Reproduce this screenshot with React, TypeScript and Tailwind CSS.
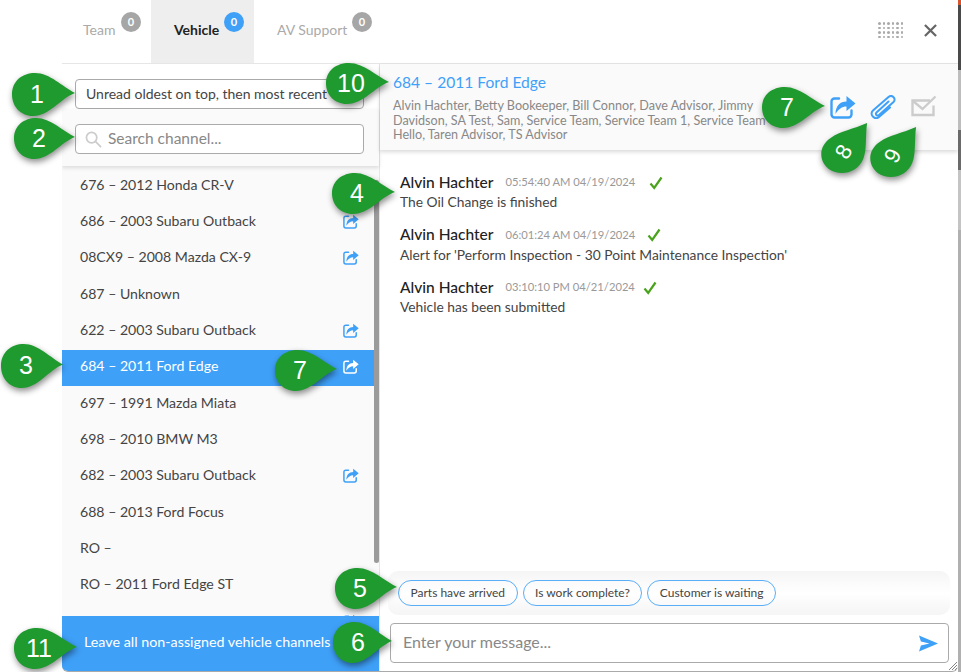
import React from "react";

function ShareIcon({ className }: { className?: string }) {
  return (
    <svg viewBox="0 0 26 24" className={className} fill="none">
      <path d="M9 3.500H4.500A3 3 0 0 0 1.500 6.500v13a3 3 0 0 0 3 3h14a3 3 0 0 0 3-3v-4" stroke="currentColor" strokeWidth="2.400" strokeLinecap="round" />
      <path d="M5.500 19c0-8 4.500-12.500 11-12.500V1L25.500 8.500 16.500 16V11.500C12 11.500 8.500 14 5.500 19z" fill="currentColor" />
    </svg>
  );
}

function Clip({ className }: { className?: string }) {
  return (
    <svg viewBox="0 0 26 24" className={className} fill="none" stroke="currentColor" strokeWidth="2" strokeLinecap="round">
      <path d="M18.500 6.500 6.500 17.500c-1.800 1.800.6 4 2.500 2.500L23.500 7c3.300-3.200-1.500-8-5-5L3 15.500c-4.200 4 1.800 10 6 6.500l11-9.500" />
    </svg>
  );
}

function Check() {
  return (
    <svg viewBox="0 0 14 14" className="w-[14px] h-[14px] text-[#4aa31c]" fill="none" stroke="currentColor" strokeWidth="2.200">
      <path d="M1.500 7.500 5.200 12 12.500 1.500" />
    </svg>
  );
}

function Callout({ n, x, y, w = 56, h = 44 }: { n: string; x: number; y: number; w?: number; h?: number }) {
  return (
    <div className="absolute z-20 flex items-center" style={{ left: x, top: y, width: w, height: h }}>
      <svg viewBox="0 0 60 44" preserveAspectRatio="none" className="absolute inset-0 w-full h-full overflow-visible drop-shadow-[1px_3px_3px_rgba(0,0,0,0.45)]">
        <path d="M0 22C0 8 10 0 22 0 36 0 48 14 60 20.500 46 26 36 44 20 44 8 44 0 34 0 22Z" fill="#1f9a2f" />
      </svg>
      <span className="relative text-white leading-none text-[25px] w-[50px] text-center pb-[1px]" style={{ fontFamily: "Liberation Sans, sans-serif" }}>{n}</span>
    </div>
  );
}

function DropCallout({ n, x, y, rot }: { n: string; x: number; y: number; rot: number }) {
  return (
    <div className="absolute z-20 w-[48px] h-[52px]" style={{ left: x, top: y }}>
      <svg viewBox="0 0 50 52" preserveAspectRatio="none" className="absolute inset-0 w-full h-full overflow-visible drop-shadow-[1px_3px_3px_rgba(0,0,0,0.45)]">
        <path d="M48 0C46 14 48 26 44 36 38 50 20 54 8 46-4 36-1 22 10 15 20 8 34 6 48 0Z" fill="#1f9a2f" />
      </svg>
      <span className="absolute left-[11px] top-[15px] w-[24px] text-center text-white text-[22px] leading-[28px]" style={{ transform: `rotate(${rot}deg)`, fontFamily: "Liberation Sans, sans-serif" }}>{n}</span>
    </div>
  );
}

const rows: { t: string; s?: boolean; a?: boolean }[] = [
  { t: "676 – 2012 Honda CR-V" },
  { t: "686 – 2003 Subaru Outback", s: true },
  { t: "08CX9 – 2008 Mazda CX-9", s: true },
  { t: "687 – Unknown" },
  { t: "622 – 2003 Subaru Outback", s: true },
  { t: "684 – 2011 Ford Edge", s: true, a: true },
  { t: "697 – 1991 Mazda Miata" },
  { t: "698 – 2010 BMW M3" },
  { t: "682 – 2003 Subaru Outback", s: true },
  { t: "688 – 2013 Ford Focus" },
  { t: "RO –" },
  { t: "RO – 2011 Ford Edge ST" },
  { t: "0100000 – 2004 Mazda 00", s: true },
];

const msgs = [
  { time: "05:54:40 AM 04/19/2024", body: "The Oil Change is finished", w: "w-[144px]" },
  { time: "06:01:24 AM 04/19/2024", body: "Alert for 'Perform Inspection - 30 Point Maintenance Inspection'", w: "w-[142px]" },
  { time: "03:10:10 PM 04/21/2024", body: "Vehicle has been submitted", w: "w-[138px]" },
];

export default function App() {
  return (
    <div className="relative w-[961px] h-[672px] overflow-hidden bg-white flex" style={{ fontFamily: "Lato, sans-serif" }}>
      <div className="w-[62px] shrink-0" />
      <div className="w-[896px] shrink-0 h-[672px] flex flex-col bg-white rounded-b-[6px] rounded-tr-[8px] overflow-hidden border-b border-[#aaa] relative">
        <header className="h-[64px] shrink-0 flex border-b border-[#e6e6e6] relative">
          <div className="w-[89px] pl-[21px] pt-[19px] text-[14px] text-[#aaa] relative">
            Team
            <span className="absolute left-[59px] top-[12px] w-[20px] h-[20px] rounded-full bg-[#a6a6a6] text-white text-[11px] font-bold flex items-center justify-center">0</span>
          </div>
          <div className="w-[103px] bg-[#eeeeee] pl-[23px] pt-[19px] text-[14px] font-bold text-[#222] relative">
            Vehicle
            <span className="absolute left-[73px] top-[12px] w-[20px] h-[20px] rounded-full bg-[#3fa0f8] text-white text-[11px] font-bold flex items-center justify-center">0</span>
          </div>
          <div className="pl-[23px] pt-[19px] text-[14px] text-[#aaa] relative">
            AV Support
            <span className="absolute left-[98px] top-[12px] w-[20px] h-[20px] rounded-full bg-[#a6a6a6] text-white text-[11px] font-bold flex items-center justify-center">0</span>
          </div>
          <div className="ml-auto flex items-center gap-[21px] pr-[21px] pb-[3px]">
            <div className="grid grid-cols-6 gap-[2px]">
              {Array.from({ length: 24 }).map((_, i) => (
                <span key={i} className="w-[2.500px] h-[2.500px] bg-[#aaa] rounded-full" />
              ))}
            </div>
            <svg viewBox="0 0 14 14" className="w-[13px] h-[13px] text-[#666]" fill="none" stroke="currentColor" strokeWidth="2.400">
              <path d="M1 1l12 12M13 1 1 13" />
            </svg>
          </div>
        </header>
        <div className="flex-1 flex min-h-0">
          <aside className="w-[318px] shrink-0 flex flex-col border-r border-[#e6e6e6] relative">
            <div className="h-[45px] shrink-0 pl-[13px] pr-[15px] pt-[15px]">
              <div className="h-[30px] border border-[#aaa] rounded-[4px] flex items-center pl-[10px] pb-[2px] text-[14px] text-[#444]">Unread oldest on top, then most recent</div>
            </div>
            <div className="h-[57px] shrink-0 bg-[#fafafa] pl-[13px] pr-[15px] pt-[15px] shadow-[0_2px_4px_rgba(0,0,0,0.12)] relative z-10">
              <div className="h-[30px] bg-white border border-[#aaa] rounded-[4px] flex items-center pl-[9px] gap-[6px]">
                <svg viewBox="0 0 18 18" className="w-[17px] h-[17px] text-[#ccc]" fill="none" stroke="currentColor" strokeWidth="1.800">
                  <circle cx="7" cy="7" r="5.500" />
                  <path d="M11 11l6 6" />
                </svg>
                <span className="text-[15.500px] text-[#888]">Search channel...</span>
              </div>
            </div>
            <div className="flex-1 min-h-0 flex relative overflow-hidden">
              <div className="w-[312px] bg-[#fafafa] overflow-hidden pt-[2px]">
                {rows.map((r) => (
                  <div key={r.t} className={`h-[36.340px] flex items-center pl-[18px] pr-[15px] pb-[4px] text-[14.100px] ${r.a ? "bg-[#3fa0f8] text-white" : "text-[#444]"}`}>
                    <span>{r.t}</span>
                    {r.s && <ShareIcon className={`ml-auto mt-[2px] w-[16px] h-[15px] ${r.a ? "text-white" : "text-[#3fa0f8]"}`} />}
                  </div>
                ))}
              </div>
              <div className="w-[5px] bg-[#fafafa] relative">
                <div className="absolute left-0 top-[14px] w-[5px] h-[383px] bg-[#9b9b9b] rounded-full" />
              </div>
            </div>
            <div className="h-[55px] shrink-0 bg-[#3fa0f8] text-white text-[14.300px] pl-[22px] pb-[3px] flex items-center">Leave all non-assigned vehicle channels</div>
          </aside>
          <main className="flex-1 min-w-0 flex flex-col">
            <div className="h-[86px] shrink-0 bg-[#fafafa] pl-[13px] pt-[8px] shadow-[0_2px_4px_rgba(0,0,0,0.15)] relative z-10">
              <div className="text-[15.600px] leading-[20px] text-[#3fa0f8]">684 – 2011 Ford Edge</div>
              <div className="mt-[7px] w-[400px] text-[12.600px] leading-[14.500px] text-[#888]">Alvin Hachter, Betty Bookeeper, Bill Connor, Dave Advisor, Jimmy Davidson, SA Test, Sam, Service Team, Service Team 1, Service Team Hello, Taren Advisor, TS Advisor</div>
              <div className="absolute right-[21px] top-[31px] flex items-center gap-[15px]">
                <ShareIcon className="w-[26px] h-[24px] text-[#3fa0f8] translate-x-[1px]" />
                <Clip className="w-[26px] h-[24px] text-[#3fa0f8]" />
                <svg viewBox="0 0 26 22" className="w-[26px] h-[22px] mb-[2px]" fill="none" stroke="#cccccc" strokeWidth="2.400">
                  <path d="M19 5.500H1.500V20H22.500V10.500" />
                  <path d="M2 6 11.500 14 24.500 1.500" />
                </svg>
              </div>
            </div>
            <div className="flex-1 min-h-0 pt-[23px] pl-[20px]">
              {msgs.map((m) => (
                <div key={m.time} className="mb-[14.500px]">
                  <div className="flex items-center h-[19px]">
                    <span className="text-[15.500px] font-medium text-[#222]">Alvin Hachter</span>
                    <span className={`ml-[12px] text-[11.200px] text-[#999] ${m.w}`}>{m.time}</span>
                    <Check />
                  </div>
                  <div className="h-[19px] text-[13.800px] text-[#444] leading-[19px]">{m.body}</div>
                </div>
              ))}
            </div>
            <div className="h-[44px] mx-[8px] shrink-0 rounded-[10px] bg-gradient-to-b from-[#f5f5f5] via-white to-[#f5f5f5] flex items-center pl-[10px] gap-[5px]">
              {["Parts have arrived", "Is work complete?", "Customer is waiting"].map((c) => (
                <span key={c} className="h-[26px] px-[11.500px] border border-[#5aaef8] rounded-full flex items-center text-[12px] text-[#444]">{c}</span>
              ))}
            </div>
            <div className="shrink-0 pl-[10px] pr-[9px] pt-[8px] pb-[8px]">
              <div className="h-[40px] border border-[#aaa] rounded-[4px] flex items-center pl-[12px] pr-[10px] text-[16px] text-[#888]">
                <span className="pb-[3px]">Enter your message...</span>
                <svg viewBox="0 0 20 17" className="ml-auto w-[19px] h-[17px]"><path d="M0 0 20 8.500 0 17 2 10.500 11 8.500 2 6.500Z" fill="#3fa0f8" /></svg>
              </div>
            </div>
          </main>
        </div>
        <svg viewBox="0 0 8 8" className="absolute right-[1px] bottom-[1px] w-[8px] h-[8px]" stroke="#666" strokeWidth="0.800">
          <path d="M0 8 8 0M3 8l5-5M6 8l2-2" />
        </svg>
      </div>
      <div className="flex-1 flex flex-col bg-[#b0b0b0]">
        <div className="h-[5px] bg-[#d9532c]" />
        <div className="h-[65px] bg-[#4a4a4a]" />
        <div className="h-[60px] bg-[#bdbdbd]" />
        <div className="h-[40px] bg-[#6a6a6a]" />
        <div className="h-[60px] bg-[#c4c4c4]" />
      </div>
      <Callout n="1" x={12} y={73} w={63} h={43} />
      <Callout n="2" x={14} y={118} w={61} h={41} />
      <Callout n="3" x={1} y={344} w={62} h={44} />
      <Callout n="7" x={275} y={350} w={62} h={41} />
      <Callout n="10" x={326} y={63} w={63} h={41} />
      <Callout n="4" x={332} y={173} w={63} h={41} />
      <Callout n="5" x={335} y={568} w={62} h={41} />
      <Callout n="6" x={333} y={622} w={59} h={41} />
      <Callout n="11" x={14} y={628} w={63} h={41} />
      <Callout n="7" x={762} y={87} w={63} h={41} />
      <DropCallout n="8" x={821} y={123} rot={-60} />
      <DropCallout n="9" x={870} y={127} rot={-60} />
    </div>
  );
}
